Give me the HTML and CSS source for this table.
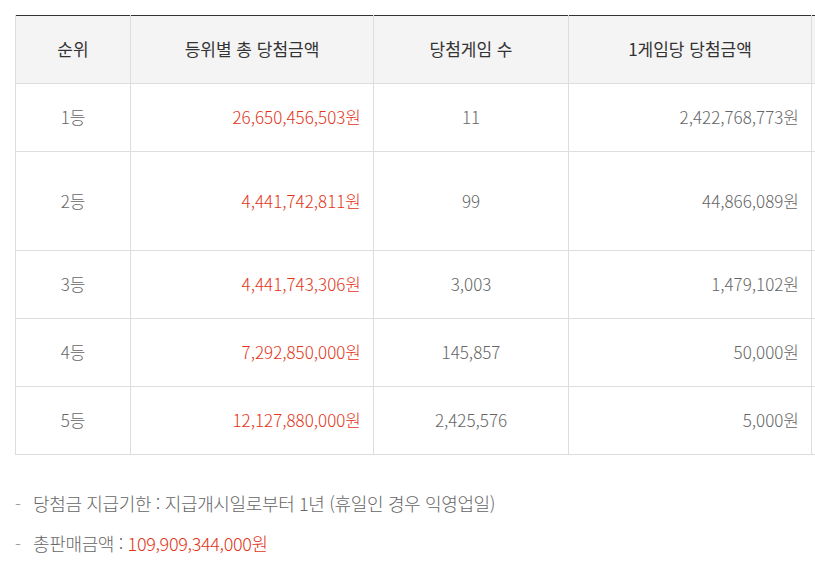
FILE: index.html
```
<!DOCTYPE html>
<html lang="ko">
<head>
<meta charset="utf-8">
<title>당첨결과</title>
<link rel="stylesheet" href="styles.css">
</head>
<body>
<div class="wrap">
  <div class="table-box">
    <table class="tbl">
      <colgroup>
        <col class="c1"><col class="c2"><col class="c3"><col class="c4"><col class="c5"><col class="c6">
      </colgroup>
      <thead>
        <tr>
          <th>순위</th>
          <th>등위별 총 당첨금액</th>
          <th>당첨게임 수</th>
          <th>1게임당 당첨금액</th>
          <th>당첨기준</th>
          <th>비고</th>
        </tr>
      </thead>
      <tbody>
        <tr>
          <td class="ctr">1등</td>
          <td class="rt red">26,650,456,503원</td>
          <td class="ctr">11</td>
          <td class="rt">2,422,768,773원</td>
          <td class="ctr">당첨번호 6개 숫자일치</td>
          <td class="ctr"></td>
        </tr>
        <tr>
          <td class="ctr">2등</td>
          <td class="rt red">4,441,742,811원</td>
          <td class="ctr">99</td>
          <td class="rt">44,866,089원</td>
          <td class="ctr">당첨번호 5개 숫자일치<br>+보너스 숫자일치</td>
          <td class="ctr"></td>
        </tr>
        <tr>
          <td class="ctr">3등</td>
          <td class="rt red">4,441,743,306원</td>
          <td class="ctr">3,003</td>
          <td class="rt">1,479,102원</td>
          <td class="ctr">당첨번호 5개 숫자일치</td>
          <td class="ctr"></td>
        </tr>
        <tr>
          <td class="ctr">4등</td>
          <td class="rt red">7,292,850,000원</td>
          <td class="ctr">145,857</td>
          <td class="rt">50,000원</td>
          <td class="ctr">당첨번호 4개 숫자일치</td>
          <td class="ctr"></td>
        </tr>
        <tr>
          <td class="ctr">5등</td>
          <td class="rt red">12,127,880,000원</td>
          <td class="ctr">2,425,576</td>
          <td class="rt">5,000원</td>
          <td class="ctr">당첨번호 3개 숫자일치</td>
          <td class="ctr"></td>
        </tr>
      </tbody>
    </table>
  </div>
  <ul class="notes">
    <li>당첨금 지급기한 : 지급개시일로부터 1년 (휴일인 경우 익영업일)</li>
    <li>총판매금액 : <span class="red">109,909,344,000원</span></li>
  </ul>
</div>
</body>
</html>
```
FILE: styles.css
```
html, body {
  margin: 0;
  padding: 0;
  background: #fff;
}
body {
  font-family: "Noto Sans CJK KR", "Noto Sans", sans-serif;
  font-weight: 300;
  color: #666;
  overflow: hidden;
}
.wrap {
  padding: 15px 0 0 15px;
}
.table-box {
  overflow: hidden;
}
.tbl {
  border-collapse: collapse;
  table-layout: fixed;
  width: 1200px;
  border-top: 1px solid #333;
  letter-spacing: 0;
}
.c1 { width: 115px; }
.c2 { width: 243px; }
.c3 { width: 195px; }
.c4 { width: 243px; }
.c5 { width: 240px; }
.c6 { width: 164px; }
.tbl th,
.tbl td {
  border: 1px solid #ddd;
  padding: 17px 12px 19px;
  line-height: 31px;
  font-size: 17px;
  vertical-align: middle;
}
.tbl thead th {
  background: #f4f4f4;
  color: #333;
  font-weight: 400;
  border-top: 0;
}
.ctr { text-align: center; }
.rt { text-align: right; }
.red { color: #e2361a; }
.notes {
  list-style: none;
  margin: 28px 0 0;
  padding: 0;
  font-size: 18px;
  letter-spacing: -0.35px;
}
.notes li {
  line-height: 40px;
  display: flex;
  white-space: pre;
}
.notes li::before {
  content: "-";
  width: 18px;
  flex: none;
  color: #999;
}
```
